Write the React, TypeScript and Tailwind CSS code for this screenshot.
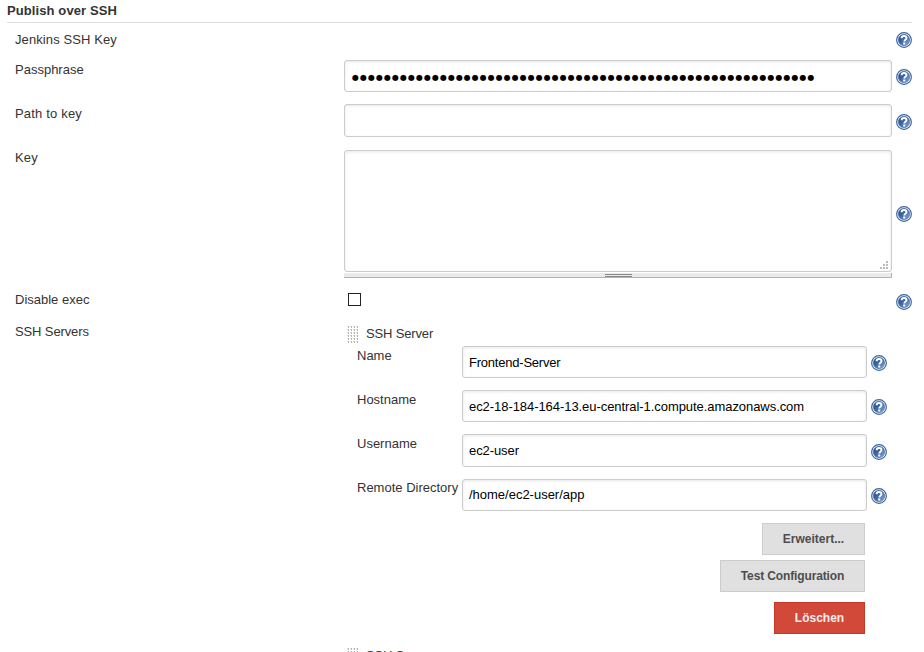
import React from "react";

function Help({ className = "" }: { className?: string }) {
  return (
    <svg viewBox="0 0 16 16" className={`h-4 w-4 shrink-0 ${className}`} role="img" aria-label="Help">
      <defs>
        <linearGradient id="helpFill" x1="0" y1="0" x2="1" y2="1">
          <stop offset="0" stopColor="#1f4480" />
          <stop offset="0.45" stopColor="#3c66a4" />
          <stop offset="1" stopColor="#8fb0dc" />
        </linearGradient>
      </defs>
      <circle cx="8" cy="8" r="7.35" fill="#fff" stroke="#3d659f" strokeWidth="1.2" />
      <circle cx="8" cy="8" r="5.7" fill="url(#helpFill)" stroke="#345c98" strokeWidth="0.5" />
      <path d="M5.6 6.3C5.6 4.6 6.6 4 8 4s2.5.8 2.5 2.1c0 1.7-2.2 1.7-2.2 3.4" fill="none" stroke="#fff" strokeWidth="1.9" />
      <rect x="7.2" y="10.5" width="2" height="2" fill="#fff" />
    </svg>
  );
}

function Grip() {
  return (
    <svg width="12" height="18" viewBox="0 0 12 18" className="shrink-0" shapeRendering="crispEdges">
      {[0, 1, 2, 3, 4, 5].map((r) =>
        [0, 1, 2, 3].map((c) => (
          <g key={`${r}-${c}`}>
            <rect x={c * 3} y={r * 3} width="2" height="1" fill="#dcdcd8" />
            <rect x={c * 3 + 1} y={r * 3} width="1" height="2" fill="#b8b8b2" />
          </g>
        ))
      )}
    </svg>
  );
}

const box = "border border-[#ccc] rounded-[3px] bg-white shadow-[inset_0_1px_3px_rgba(0,0,0,0.1)] shrink-0";

function Row({ label, height, labelClass = "", children }: { label: string; height: string; labelClass?: string; children?: React.ReactNode }) {
  return (
    <div className={`flex items-start pl-[15px] ${height}`}>
      <div className={`w-[329px] shrink-0 leading-5 ${labelClass}`}>{label}</div>
      {children}
    </div>
  );
}

function Field({ label, value, height, boxHeight, labelClass = "", valueClass, help }: { label: string; value: string; height: string; boxHeight: string; labelClass?: string; valueClass: string; help: string }) {
  return (
    <div className={`flex items-start pl-[13px] ${height}`}>
      <div className={`w-[105px] shrink-0 whitespace-nowrap leading-5 ${labelClass}`}>{label}</div>
      <div className={`flex w-[405px] items-center px-1.5 text-black ${box} ${boxHeight}`}>
        <span className={valueClass}>{value}</span>
      </div>
      <Help className={`ml-1 ${help}`} />
    </div>
  );
}

function Button({ children, className }: { children: React.ReactNode; className: string }) {
  return (
    <button className={`flex h-8 items-center justify-center border text-[12px] font-bold ${className}`}>{children}</button>
  );
}

export default function App() {
  return (
    <main className="h-[652px] w-[924px] overflow-hidden bg-white font-['Liberation_Sans',Arial,sans-serif] text-[13px] text-[#333]">
      <h1 className="ml-[7px] h-[23px] w-[905px] border-b border-[#ddd] text-[13px] font-bold leading-[21px] tracking-[0.1px]">Publish over SSH</h1>
      <Row label="Jenkins SSH Key" height="h-[37px]" labelClass="pt-[7px] tracking-[0.1px]">
        <Help className="ml-[552px] mt-[9px]" />
      </Row>
      <Row label="Passphrase" height="h-[44px]">
        <div className={`flex h-8 w-[548px] items-center px-1.5 ${box}`}>
          <span className="whitespace-nowrap pl-px pt-[3px] font-['DejaVu_Sans',sans-serif] text-[8px] tracking-[1.01px] text-black">{"●".repeat(58)}</span>
        </div>
        <Help className="ml-1 mt-[9px]" />
      </Row>
      <Row label="Path to key" height="h-[46px]" labelClass="tracking-[0.18px]">
        <div className={`h-[33px] w-[548px] ${box}`} />
        <Help className="ml-1 mt-[10px]" />
      </Row>
      <Row label="Key" height="h-[143px]" labelClass="-mt-[2px] tracking-[0.15px]">
        <div className="w-[548px] shrink-0">
          <div className={`flex h-[122px] items-end justify-end ${box}`}>
            <svg width="9" height="9" className="mb-px mr-[2px]" fill="#bbb" shapeRendering="crispEdges">
              <path d="M6 0h2v2H6zM3 3h2v2H3zM6 3h2v2H6zM0 6h2v2H0zM3 6h2v2H3zM6 6h2v2H6z" />
            </svg>
          </div>
          <div className="mt-px flex h-[5px] border-b border-r border-[#b5b5b0] bg-[#eaeaea] pl-[261px]">
            <div className="mt-px h-[3px] w-[27px] border-y border-[#888]" />
          </div>
        </div>
        <Help className="ml-1 mt-14" />
      </Row>
      <Row label="Disable exec" height="h-[33px]" labelClass="-mt-[3px]">
        <div className="ml-1 h-[13px] w-[13px] border border-[#222]" />
        <Help className="ml-[535px] mt-px" />
      </Row>
      <Row label="SSH Servers" height="h-[319px]" labelClass="-mt-[4px] tracking-[-0.12px]">
        <div className="w-[543px] shrink-0">
          <div className="flex h-5 items-start pl-[3px]">
            <Grip />
            <span className="-mt-[2px] ml-[7px] leading-5 tracking-[-0.15px]">SSH Server</span>
          </div>
          <Field label="Name" value="Frontend-Server" height="h-[44px]" boxHeight="h-8" help="mt-[9px]" valueClass="pt-px tracking-[-0.22px]" />
          <Field label="Hostname" value="ec2-18-184-164-13.eu-central-1.compute.amazonaws.com" height="h-[44px]" boxHeight="h-8" help="mt-[9px]" valueClass="pt-px tracking-[-0.06px]" />
          <Field label="Username" value="ec2-user" height="h-[45px]" boxHeight="h-[33px]" help="mt-[10px]" valueClass="tracking-[-0.08px]" />
          <Field label="Remote Directory" value="/home/ec2-user/app" height="h-[44px]" boxHeight="h-8" help="mt-[9px]" labelClass="-mt-px" valueClass="tracking-[-0.01px]" />
          <div className="flex w-[521px] flex-col items-end">
            <Button className="w-[103px] border-[#ccc] bg-[#e0e0e0] text-[#4d4d4d]">Erweitert...</Button>
            <Button className="mt-[5px] w-[145px] border-[#ccc] bg-[#e0e0e0] tracking-[-0.13px] text-[#4d4d4d]">Test Configuration</Button>
            <Button className="mt-[10px] w-[91px] border-[#c53727] bg-[#d24939] text-[#f5eeee]">Löschen</Button>
          </div>
        </div>
      </Row>
      <div className="flex h-5 items-start overflow-hidden pl-[347px] pt-[3px]">
        <Grip />
        <span className="-mt-[2px] ml-[7px] leading-5 tracking-[-0.15px]">SSH Server</span>
      </div>
    </main>
  );
}
